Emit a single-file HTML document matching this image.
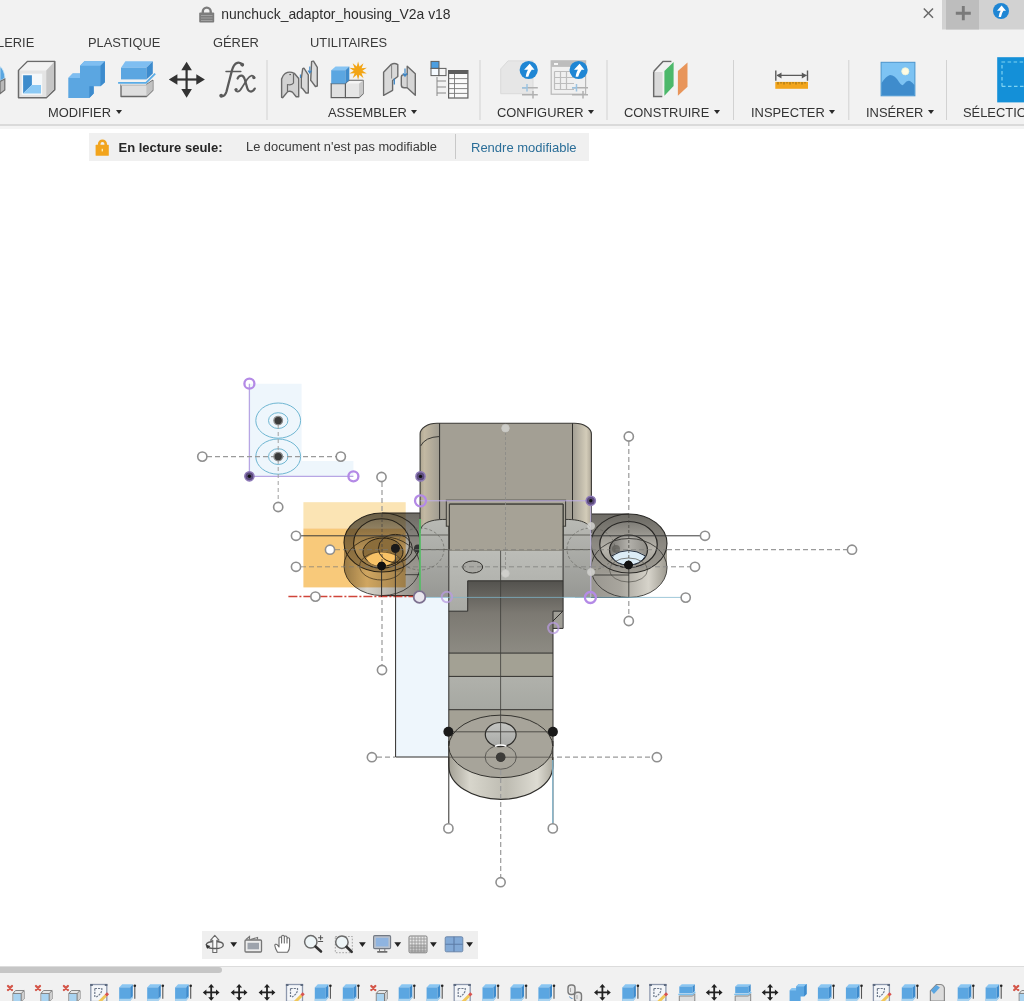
<!DOCTYPE html>
<html><head><meta charset="utf-8">
<style>
*{margin:0;padding:0;box-sizing:border-box}
html,body{width:1024px;height:1001px;overflow:hidden;background:#fff;font-family:"Liberation Sans",sans-serif;color:#3c3c3c}
.abs{position:absolute}
#top{position:absolute;left:0;top:0;width:1024px;height:125px;background:#f2f2f2}
#tb-line{position:absolute;left:0;top:124px;width:1024px;height:1.6px;background:#dadada}
#tb-line2{position:absolute;left:0;top:125.6px;width:1024px;height:3.6px;background:#f4f4f4}
.t{position:absolute;white-space:nowrap;line-height:1}
.tab{font-size:12.9px;color:#3a3a3a;top:36.8px}
.lbl{font-size:12.9px;color:#333;top:107px}
.caret{display:inline-block;width:0;height:0;border-left:3px solid transparent;border-right:3px solid transparent;border-top:4.5px solid #2a2a2a;margin-left:4.5px;vertical-align:3px}
.sep{position:absolute;top:60px;width:1px;height:60px;background:#d4d4d4}
#banner{position:absolute;left:89px;top:133px;width:500px;height:28px;background:#f0f0f0}
#navbar{position:absolute;left:202px;top:931px;width:276px;height:28px;background:#f0f0f0}
#timeline{position:absolute;left:0;top:965.5px;width:1024px;height:36px;background:#f1f1f1;border-top:1px solid #dcdcdc}
#scroll{position:absolute;left:0;top:966.5px;width:222px;height:6.5px;background:#c6c6c6;border-radius:0 3.5px 3.5px 0}
</style></head><body>
<div id="top"></div>
<div id="tb-line"></div><div id="tb-line2"></div>


<svg id="toolbar" style="position:absolute;left:0;top:0" width="1024" height="130" viewBox="0 0 1024 130">
<defs>
 <linearGradient id="tbBlueTop" x1="0" x2="0" y1="0" y2="1"><stop offset="0" stop-color="#8fcaf5"/><stop offset="1" stop-color="#6db6ee"/></linearGradient>
</defs>
<!-- tab area top right -->
<rect x="942" y="0" width="82" height="29.5" fill="#d2d2d2"/>
<rect x="946" y="0" width="33" height="29.5" fill="#bdbdbd"/>
<path d="M955.8 13.2 H970.8 M963.3 5.9 V20.3" stroke="#7a7a7a" stroke-width="2.9"/>
<circle cx="1001" cy="11" r="8" fill="#1f86d4"/>
<path d="M997 10.8 L1001.6 5.6 L1006 10.8 Z M998.6 17 Q999.2 12.5 1000.8 10.5 L1003.6 10.5 Q1001.6 13 1001 17 Z" fill="#fff"/>
<!-- close x -->
<path d="M923.8 8.5 L933 17.7 M933 8.5 L923.8 17.7" stroke="#6a6a6a" stroke-width="1.5"/>
<!-- title lock -->
<path d="M202.8 13 V11.6 A3.95 3.95 0 0 1 210.7 11.6 V13" fill="none" stroke="#7c7c7c" stroke-width="2.4"/>
<rect x="199.2" y="12.5" width="15" height="10" rx="1" fill="#7c7c7c"/>
<path d="M201 15.5 H212.5 M201 18 H212.5 M201 20.5 H212.5" stroke="#a9a9a9" stroke-width="0.8"/>

<!-- partial left icon -->
<path d="M0 66.5 Q4.5 70 5 78 L0 81 Z" fill="#5aa6e0" stroke="#cfe8f8" stroke-width="0.8"/>
<path d="M0 81.5 L4.8 79 V90 L0 93.7 Z" fill="#b9b9b9" stroke="#6e6e6e" stroke-width="1.2"/>

<!-- shell -->
<path d="M18.5 70.5 L27.4 61.4 H54.8 V89.6 L46.3 97.8 H18.5 Z" fill="#e4e4e4" stroke="#6b6b6b" stroke-width="1.5" stroke-linejoin="round"/>
<path d="M19.3 70.5 L27.8 62.2 H53.8 L46.3 70.5 Z" fill="#f3f3f3"/>
<path d="M46.3 70.5 L54 62.2 V89.2 L46.3 97 Z" fill="#c6c6c6"/>
<rect x="21.7" y="73.7" width="20.5" height="21.1" fill="#f5f8fa"/>
<path d="M23.1 75.2 H31.9 V84.9 L23.1 93.4 Z" fill="#3d8ccc"/>
<path d="M23.1 93.4 L31.9 84.9 H41 V93.4 Z" fill="#8cc9f4"/>

<!-- combine -->
<path d="M68.3 77.9 L72.7 73.6 H80 V65.7 L84.4 61.3 H104.9 V82.3 L100.5 86.3 H93.7 V93.6 L89.3 98 H68.3 Z" fill="#5ba6e1"/>
<path d="M68.3 77.9 L72.7 73.6 H80 V77.9 Z M80 65.7 L84.4 61.3 H104.9 L100.5 65.7 Z" fill="#7fbef1"/>
<path d="M100.5 65.7 L104.9 61.3 V82.3 L100.5 86.3 Z M89.3 86.3 H93.7 V93.6 L89.3 98 Z" fill="#3d8bcd"/>

<!-- split -->
<path d="M121 67.7 L125.4 61.3 H152.8 L146.4 67.7 Z" fill="#7fbef1"/>
<rect x="121" y="67.7" width="25.4" height="11.7" fill="#5ba6e1"/>
<path d="M146.4 67.7 L152.8 61.3 V73.6 L146.4 79.4 Z" fill="#3d8bcd"/>
<path d="M118.1 82.8 H146 L155.2 73.6" fill="none" stroke="#5aace6" stroke-width="1.8"/>
<path d="M121 84.8 H146.4 L152.8 80.4 V90.2 L146.4 96.5 H121 Z" fill="#dedede" stroke="#666" stroke-width="1.3" stroke-linejoin="round"/>
<path d="M146.4 84.8 L152.8 80.4 V90.2 L146.4 96.5 Z" fill="#c2c2c2"/>
<path d="M121 84.8 H146.4" stroke="#dedede" stroke-width="1.5"/>

<!-- move -->
<g fill="#333">
 <rect x="185.5" y="66" width="2.2" height="27"/><rect x="173" y="78.4" width="27" height="2.2"/>
 <path d="M186.6 61.7 L181.3 70.3 H191.9 Z M186.6 97.7 L181.3 89 H191.9 Z M168.8 79.5 L177.4 74.2 V84.8 Z M204.9 79.5 L196.3 74.2 V84.8 Z"/>
</g>
<!-- fx -->
<g fill="none" stroke="#5a5a5a" stroke-linecap="round">
 <path d="M242.6 65.2 Q240.5 62 237.3 62.8 Q233.5 64 231.8 71 L226.5 91.5 Q224.8 97 221 96.3" stroke-width="2.3"/>
 <circle cx="242.2" cy="64.6" r="1.9" fill="#5a5a5a" stroke="none"/>
 <circle cx="221.2" cy="95.6" r="1.9" fill="#5a5a5a" stroke="none"/>
 <path d="M226 71.4 H240.8" stroke-width="1.5"/>
 <path d="M237.6 78.5 Q239 75.2 241.8 75.6 Q243.8 76 244.8 79.5 L247.3 88.3 Q248.3 91.6 251 91.6 Q253.4 91.4 254.8 88.6" stroke-width="2.2"/>
 <path d="M254.6 78 Q253.8 75.5 251.6 75.6 Q249.6 75.8 247.2 79.3 L242 87.5 Q239.8 91.6 237.4 91.6 Q235.6 91.5 235.4 89.8" stroke-width="1.6"/>
 <circle cx="253.8" cy="77.6" r="1.6" fill="#5a5a5a" stroke="none"/>
 <circle cx="236.1" cy="89.6" r="1.6" fill="#5a5a5a" stroke="none"/>
</g>
<rect x="266.5" y="60" width="1" height="60" fill="#d2d2d2"/>

<!-- joint -->
<g stroke="#6a6a6a" stroke-width="1.4" stroke-linejoin="round">
 <path d="M281.6 97.3 V79 Q282.5 75.5 285.4 73.3 Q289.5 71 294.3 73.3 L298.7 78.5 V96.8 H296.2 L292.4 92.1 Q290 90.8 287.7 91.6 L282.6 97.7 Z" fill="#d2d2d2"/>
 <path d="M293.5 73.5 V83 Q292 85.5 287.5 84.5 V91.6" fill="none" stroke-width="1.2"/>
 <path d="M301.3 78.5 L302.7 68.7 Q303.5 68 304.1 68.4 L308.3 74.8 V93 H306 L302.3 88.3 L301.3 87.9 Z" fill="#dadada"/>
 <path d="M310.7 80.4 L311.6 61.6 Q312.5 60.9 313.5 61.2 L317.3 67.3 V86 L315.4 86.5 L311.6 81.3 Z" fill="#dddddd"/>
</g>
<path d="M289.3 74.6 H291" stroke="#555" stroke-width="1"/>
<path d="M300.4 74.5 V78 M309.8 66.5 V73 M308 70.5 L309.8 73 L311.6 70.5" stroke="#3d86c6" stroke-width="1.1" fill="none"/>
<!-- new component -->
<path d="M345.4 83.6 L349.3 80.3 H363.1 V93.5 L359 97.6 H345.4 Z" fill="#e6e6e6" stroke="#5e5e5e" stroke-width="1.2" stroke-linejoin="round"/>
<path d="M359 83.6 L363.1 80.3 V93.5 L359 97.6 Z" fill="#c9c9c9"/>
<path d="M346 83.6 H359 L362.6 80.8 H349.5 Z" fill="#f4f4f4"/>
<rect x="331.2" y="83.6" width="14.2" height="14" fill="#e0e0e0" stroke="#5e5e5e" stroke-width="1.2"/>
<path d="M331.2 70.2 L335.6 66.6 H349.3 L345.4 70.2 Z" fill="#86c4f3"/>
<rect x="331.2" y="70.2" width="14.2" height="13.4" fill="#5ba6e1"/>
<path d="M345.4 70.2 L349.3 66.6 V80 L345.4 83.6 Z" fill="#3f8ccc"/>
<path d="M358.10 61.50 L359.43 66.61 L363.51 63.26 L361.58 68.17 L366.85 67.86 L362.40 70.70 L366.85 73.54 L361.58 73.23 L363.51 78.14 L359.43 74.79 L358.10 79.90 L356.77 74.79 L352.69 78.14 L354.62 73.23 L349.35 73.54 L353.80 70.70 L349.35 67.86 L354.62 68.17 L352.69 63.26 L356.77 66.61 Z" fill="#f2a516"/>
<!-- joint 2 -->
<g stroke="#6a6a6a" stroke-width="1.4" stroke-linejoin="round">
 <path d="M383.6 72.2 L391.3 64.3 Q394.5 62.6 397.8 64.6 V76.5 L392.6 80.5 V90.3 L383.6 95.3 Z" fill="#d9d9d9"/>
 <path d="M401.3 77 Q401.3 74.6 404.2 74.6 H407.2 V66.3 L415.3 73.8 V95.3 L407.2 87.8 H404.2 Q401.3 87.8 401.3 85 Z" fill="#d6d6d6"/>
</g>
<path d="M391.6 64.5 V78.5 M407.2 74.6 V87.8" stroke="#7a7a7a" stroke-width="0.9"/>
<path d="M394.3 78.5 V84.5" stroke="#3d86c6" stroke-width="1.3"/>
<path d="M405 68.5 V75.5 M403 73.3 L405 76.2 L407 73.3" stroke="#3d86c6" stroke-width="1.2" fill="none"/>
<!-- BOM -->
<rect x="431" y="61.4" width="8" height="7" fill="#4c9ee0" stroke="#5e5e5e" stroke-width="1"/>
<rect x="431" y="68.4" width="8" height="7.2" fill="#f5faff" stroke="#5e5e5e" stroke-width="1"/>
<rect x="439" y="68.4" width="7" height="7.2" fill="#f5f5f5" stroke="#5e5e5e" stroke-width="1"/>
<path d="M437 77 V96 M437 81 H446 M437 87 H446 M437 93 H446" stroke="#888" stroke-width="1"/>
<rect x="448.6" y="70.6" width="19.3" height="27.4" fill="#fafafa" stroke="#5e5e5e" stroke-width="1.2"/>
<rect x="448.6" y="70.6" width="19.3" height="3.4" fill="#5e5e5e"/>
<path d="M448.6 78.6 H467.9 M448.6 83.6 H467.9 M448.6 88.6 H467.9 M448.6 93.4 H467.9 M454.5 74 V98" stroke="#777" stroke-width="0.9"/>
<rect x="479.5" y="60" width="1" height="60" fill="#d2d2d2"/>

<!-- configure 1 -->
<path d="M500.7 69 L508 60.9 H533 V93.7 H500.7 Z" fill="#e6e6e6" stroke="#dadada" stroke-width="1"/>
<circle cx="528.7" cy="70" r="9.1" fill="#1f86d4"/>
<path d="M524.1 69.8 L529.7 63.8 L534.5 69.8 Z M525.7 76.8 Q526.5 71.2 528.5 69.5 L531.9000000000001 69.5 Q529.5 72.5 528.3000000000001 76.8 Z" fill="#fff"/>
<path d="M522 87.8 H537.8 M522 94.7 H537.8" stroke="#b0b0b0" stroke-width="1.5"/>
<path d="M527 84 V91.5" stroke="#9cc3e0" stroke-width="1.5"/><path d="M533 91 V98.5" stroke="#b0b0b0" stroke-width="1.5"/>
<path d="M522 87.8 H527" stroke="#9cc3e0" stroke-width="1.5"/>

<!-- configure 2 -->
<rect x="551.2" y="60.9" width="34.4" height="33.3" fill="#f0f0f0" stroke="#b8b8b8" stroke-width="1.2"/>
<rect x="551.2" y="60.9" width="34.4" height="6" fill="#bdbdbd"/>
<rect x="554" y="63" width="4" height="2" fill="#f6f6f6"/>
<path d="M554.5 71.5 H574 M554.5 77.5 H574 M554.5 83.5 H574 M554.5 89.5 H574 M554.5 71.5 V89.5 M560.5 71.5 V89.5 M566.5 71.5 V89.5" stroke="#bdbdbd" stroke-width="1.2" fill="none"/>
<circle cx="578.6" cy="70" r="9.1" fill="#1f86d4"/>
<path d="M574.0 69.8 L579.6 63.8 L584.4 69.8 Z M575.6 76.8 Q576.4 71.2 578.4 69.5 L581.8000000000001 69.5 Q579.4 72.5 578.2 76.8 Z" fill="#fff"/>
<path d="M572 87.8 H588 M572 94.7 H588" stroke="#b0b0b0" stroke-width="1.5"/>
<path d="M576.5 84 V91.5" stroke="#9cc3e0" stroke-width="1.5"/><path d="M583 91 V98.5" stroke="#b0b0b0" stroke-width="1.5"/>
<path d="M572 87.8 H577" stroke="#9cc3e0" stroke-width="1.5"/>
<rect x="606.5" y="60" width="1" height="60" fill="#d2d2d2"/>

<!-- construct -->
<path d="M653.7 71.6 L663 61.4 H671.4" fill="none" stroke="#6a6a6a" stroke-width="1.5"/>
<path d="M654.4 72 H662.5 V95.8 H654.4 Z" fill="#d9d9d9"/>
<path d="M653.7 71.6 V96.4 H662.3" fill="none" stroke="#6a6a6a" stroke-width="1.5"/>
<path d="M663.5 62.5 H672 L663 71.5 Z" fill="#f0f0f0"/>
<path d="M664.4 71.1 L673.6 62 V86.1 L664.4 95.8 Z" fill="#4cb86a"/>
<path d="M677.9 71.1 L687.5 62.5 V86.7 L677.9 95.8 Z" fill="#e8955a"/>
<rect x="733" y="60" width="1" height="60" fill="#d2d2d2"/>

<!-- inspect -->
<rect x="775.3" y="81.9" width="32.7" height="6.9" fill="#f2a51c"/>
<path d="M778 82 V84.5 M781 82 V83.5 M784 82 V84.5 M787 82 V83.5 M790 82 V84.5 M793 82 V83.5 M796 82 V84.5 M799 82 V83.5 M802 82 V84.5 M805 82 V83.5" stroke="#7a5a10" stroke-width="0.8"/>
<path d="M775.8 70.6 V80.8 M807.5 70.6 V80.8 M777 75.4 H806.5" stroke="#5a5a5a" stroke-width="1.4"/>
<path d="M776.5 75.4 L781.5 72.4 V78.4 Z M806.8 75.4 L801.8 72.4 V78.4 Z" fill="#5a5a5a"/>
<rect x="848.3" y="60" width="1" height="60" fill="#d2d2d2"/>

<!-- insert -->
<rect x="881.1" y="62.3" width="33.8" height="33.5" fill="#7dc3f3" stroke="#4a94cc" stroke-width="1"/>
<path d="M881.6 83 Q886 76 890 75 Q895 75 899 82 Q902 87 904 84 Q907 80 910 81 Q913 83 914.4 85 V95.3 H881.6 Z" fill="#3f8ccc"/>
<circle cx="905.3" cy="71.3" r="3.6" fill="#fffbe2" stroke="#e9f3da" stroke-width="0.8"/>
<rect x="946" y="60" width="1" height="60" fill="#d2d2d2"/>

<!-- select -->
<rect x="997.2" y="57.2" width="30" height="45.2" fill="#1490d8"/>
<path d="M1002 86.4 V62 H1030 M1002 86.4 H1030" fill="none" stroke="#7fd3f2" stroke-width="1.2" stroke-dasharray="3.5 2.5"/>
</svg>

<!-- title -->
<div class="t" style="left:221.2px;top:7.8px;font-size:13.9px;color:#2e2e2e">nunchuck_adaptor_housing_V2a v18</div>

<!-- tabs -->
<div class="t tab" style="left:-3px">LERIE</div>
<div class="t tab" style="left:88px">PLASTIQUE</div>
<div class="t tab" style="left:213px">GÉRER</div>
<div class="t tab" style="left:310px">UTILITAIRES</div>

<!-- labels -->
<div class="t lbl" style="left:48px">MODIFIER<span class="caret"></span></div>
<div class="t lbl" style="left:328px">ASSEMBLER<span class="caret"></span></div>
<div class="t lbl" style="left:497px">CONFIGURER<span class="caret"></span></div>
<div class="t lbl" style="left:624px">CONSTRUIRE<span class="caret"></span></div>
<div class="t lbl" style="left:751px">INSPECTER<span class="caret"></span></div>
<div class="t lbl" style="left:866px">INSÉRER<span class="caret"></span></div>
<div class="t lbl" style="left:963px">SÉLECTION</div>

<div id="banner"></div>
<svg style="position:absolute;left:90px;top:135px" width="25" height="25" viewBox="90 135 25 25">
<path d="M99.2 145.5 V144 A3.25 3.25 0 0 1 105.7 144 V145.5" fill="none" stroke="#f0a41f" stroke-width="2.6"/>
<rect x="95.6" y="144.8" width="13.2" height="11" rx="0.6" fill="#f2a41c"/>
<rect x="101.6" y="148.8" width="1.4" height="2.6" fill="#ffe9a8"/>
</svg>

<div class="t" style="left:118.5px;top:141px;font-size:13px;font-weight:bold;color:#262626">En lecture seule:</div>
<div class="t" style="left:246px;top:141px;font-size:12.85px;color:#3a3a3a">Le document n'est pas modifiable</div>
<div class="abs" style="left:455px;top:134px;width:1px;height:25px;background:#c8c8c8"></div>
<div class="t" style="left:471px;top:141px;font-size:13px;color:#2b6e98">Rendre modifiable</div>


<svg id="model" style="position:absolute;left:0;top:0" width="1024" height="1001" viewBox="0 0 1024 1001">
<defs>
 <linearGradient id="gTopL" x1="0" x2="1" y1="0" y2="0"><stop offset="0" stop-color="#b0a792"/><stop offset="0.2" stop-color="#c3b9a3"/><stop offset="1" stop-color="#a09c91"/></linearGradient>
 <linearGradient id="gTopR" x1="0" x2="1" y1="0" y2="0"><stop offset="0" stop-color="#a29e93"/><stop offset="0.75" stop-color="#d3ccb9"/><stop offset="1" stop-color="#b2ab9b"/></linearGradient>
 <linearGradient id="gShL" x1="0" x2="0" y1="0" y2="1"><stop offset="0" stop-color="#b9bab5"/><stop offset="1" stop-color="#979894"/></linearGradient>
 <linearGradient id="gNotch" x1="0" x2="0" y1="0" y2="1"><stop offset="0" stop-color="#bcbdb8"/><stop offset="1" stop-color="#a9aaa5"/></linearGradient>
 <linearGradient id="gDark" x1="0" x2="0" y1="0" y2="1"><stop offset="0" stop-color="#53524e"/><stop offset="0.45" stop-color="#7c7972"/><stop offset="1" stop-color="#8d8b83"/></linearGradient>
 <linearGradient id="gBand2" x1="0" x2="0" y1="0" y2="1"><stop offset="0" stop-color="#b0b1ab"/><stop offset="1" stop-color="#a6a8a2"/></linearGradient>
 <linearGradient id="gCyl" x1="0" x2="1" y1="0" y2="0"><stop offset="0" stop-color="#a3a095"/><stop offset="0.2" stop-color="#d8d6cc"/><stop offset="0.55" stop-color="#bdbbb1"/><stop offset="0.85" stop-color="#dddbd2"/><stop offset="1" stop-color="#aeaba0"/></linearGradient>
 <linearGradient id="gEarR" x1="0" x2="1" y1="0" y2="0"><stop offset="0" stop-color="#6e6c66"/><stop offset="0.5" stop-color="#8a877f"/><stop offset="0.85" stop-color="#c9c6bc"/><stop offset="1" stop-color="#8f8c84"/></linearGradient>
 <linearGradient id="gEarL" x1="0" x2="1" y1="0" y2="0"><stop offset="0" stop-color="#8c7a55"/><stop offset="0.4" stop-color="#b08f52"/><stop offset="0.8" stop-color="#7a6f5c"/><stop offset="1" stop-color="#5c5b58"/></linearGradient>

 <linearGradient id="gEarSide" x1="0" x2="1" y1="0" y2="0"><stop offset="0" stop-color="#8f8d87"/><stop offset="0.5" stop-color="#a9a69e"/><stop offset="0.8" stop-color="#d6d3ca"/><stop offset="1" stop-color="#9c998f"/></linearGradient>
 <linearGradient id="gEarSideL" x1="0" x2="1" y1="0" y2="0"><stop offset="0" stop-color="#9c998f"/><stop offset="0.25" stop-color="#d6d3ca"/><stop offset="0.6" stop-color="#a9a69e"/><stop offset="1" stop-color="#7d7b76"/></linearGradient>
 <linearGradient id="gEarTop" x1="0" x2="0" y1="0" y2="1"><stop offset="0" stop-color="#6d6b65"/><stop offset="0.5" stop-color="#8b8881"/><stop offset="1" stop-color="#9d9a92"/></linearGradient>
 <linearGradient id="gRing" x1="0" x2="0" y1="0" y2="1"><stop offset="0" stop-color="#7f7d77"/><stop offset="0.6" stop-color="#b8b5ad"/><stop offset="1" stop-color="#9a978f"/></linearGradient>
 <linearGradient id="gHole" x1="0" x2="1" y1="0" y2="0"><stop offset="0" stop-color="#7a7873"/><stop offset="0.5" stop-color="#b3b1ab"/><stop offset="1" stop-color="#8e8c86"/></linearGradient>
<linearGradient id="gHole2" x1="0" x2="0" y1="0" y2="1"><stop offset="0" stop-color="#c4c5c2"/><stop offset="1" stop-color="#a7a8a5"/></linearGradient>
</defs>

<!-- light blue sketch regions -->
<path d="M249.4 383.7 H301.6 V461 H353.4 V476.3 H249.4 Z" fill="#eef6fc"/>
<rect x="395.6" y="597" width="53.2" height="160" fill="#eef6fc"/>


<!-- right ear -->
<g id="earR">
 <path d="M575 514 H629 A38 29.5 0 0 1 667 543.5 V568.0 A38 29.5 0 0 1 629 597.5 H575 Z" fill="url(#gEarSide)"/>
 <path d="M575 514 H629 A38 29.5 0 0 1 667 543.5 A38 29.5 0 0 1 629 573.0 H575 Z" fill="url(#gEarTop)"/>
 <ellipse cx="628.5" cy="544.5" rx="28.75" ry="23" fill="url(#gRing)" stroke="#262523" stroke-width="1.2"/>
 <ellipse cx="628.5" cy="550" rx="19" ry="15" fill="url(#gHole)" stroke="#262523" stroke-width="1.2"/>
 <circle cx="616" cy="549" r="4" fill="#55534f" fill-opacity="0.6"/>
 <path d="M611.5 556 Q628.5 545 645.5 556 Q640 565 628.5 565 Q616 565 611.5 556 Z" fill="#dcecf6" stroke="#263040" stroke-width="1"/>
 <ellipse cx="628.5" cy="570" rx="19" ry="12" fill="none" stroke="#55534e" stroke-width="0.7"/>
 <ellipse cx="629" cy="568.0" rx="38" ry="29.5" fill="none" stroke="#3a3935" stroke-width="0.9"/>
 <ellipse cx="629" cy="543.5" rx="38" ry="29.5" fill="none" stroke="#2a2926" stroke-width="1.1"/>
 <path d="M591 514 H629 M591 597.5 H629" stroke="#2a2926" stroke-width="1.1"/>
 <path d="M591 575 H629 M628.8 565 V597.5" stroke="#2a2926" stroke-width="0.8"/>
 <circle cx="628.5" cy="565" r="4.3" fill="#111"/>
</g>
<!-- left ear -->
<g id="earL">
 <path d="M436 513 H382 A38 29.5 0 0 0 344 542.5 V566.1 A38 29.5 0 0 0 382 595.6 H436 Z" fill="url(#gEarSideL)"/>
 <path d="M436 513 H382 A38 29.5 0 0 0 344 542.5 A38 29.5 0 0 0 382 572.0 H436 Z" fill="url(#gEarTop)"/>
 <ellipse cx="381.6" cy="543.4" rx="28" ry="24.7" fill="url(#gRing)" stroke="#262523" stroke-width="1.1"/>
 <ellipse cx="383" cy="552" rx="20" ry="14" fill="#8f8a7a" stroke="#262523" stroke-width="1"/>
 <path d="M366 558 Q381 546 397 556 Q392 566 381 566 Q370 566 366 558 Z" fill="#fff6d6"/>
 <ellipse cx="395.4" cy="548.4" rx="17" ry="14" fill="none" stroke="#33312d" stroke-width="1"/>
 <ellipse cx="381.6" cy="566" rx="22" ry="14" fill="none" stroke="#4a4843" stroke-width="0.8"/>
 <ellipse cx="382" cy="566.1" rx="38" ry="29.5" fill="none" stroke="#3a3935" stroke-width="0.9"/>
 <ellipse cx="382" cy="542.5" rx="38" ry="29.5" fill="none" stroke="#2a2926" stroke-width="1.1"/>
 <path d="M382 513 H420 M382 595.6 H420" stroke="#2a2926" stroke-width="1.1"/>
 <path d="M405 574.7 H420" stroke="#2a2926" stroke-width="0.8"/>
 <circle cx="381.6" cy="566" r="4.3" fill="#111"/>
 <circle cx="395.4" cy="548.4" r="4.3" fill="#1a1a1a"/>
 <circle cx="418" cy="548.4" r="4" fill="#333"/>
</g>
<!-- orange profile multiply -->
<rect x="303.4" y="502.2" width="102.3" height="26.3" fill="#fbe4b4" style="mix-blend-mode:multiply"/>
<rect x="303.4" y="528.5" width="102.3" height="58.9" fill="#f8c97a" style="mix-blend-mode:multiply"/>

<!-- upper housing -->
<path d="M420.1 532 V434 A17 10.7 0 0 1 437 423.3 H574.5 A17 10.7 0 0 1 591.4 434 V532 Z" fill="#a39f94"/>
<path d="M420.6 532 V434 A16.5 10.2 0 0 1 437 423.8 H439.6 V532 Z" fill="url(#gTopL)"/>
<path d="M572.5 532 V423.8 H574.5 A16.5 10.2 0 0 1 590.9 434 V532 Z" fill="url(#gTopR)"/>
<path d="M420.1 532 V434 A17 10.7 0 0 1 437 423.3 H574.5 A17 10.7 0 0 1 591.4 434 V532" fill="none" stroke="#3a3935" stroke-width="1.1"/>
<path d="M439.6 423.3 V519.4 M572.5 423.3 V519.4" stroke="#2e2d2a" stroke-width="1"/>
<path d="M420.6 446 Q425 437 439.6 436.5" fill="none" stroke="#3a3935" stroke-width="1"/>

<!-- shoulders -->
<path d="M420.1 597 V533 C420.1 524 428 519.4 446 519.4 H448.8 V597 Z" fill="url(#gShL)"/>
<path d="M591.4 597 V533 C591.4 524 583.5 519.4 565.5 519.4 H563.1 V597 Z" fill="url(#gShL)"/>
<path d="M420.1 533 C420.1 524 428 519.4 446 519.4 M591.4 533 C591.4 524 583.5 519.4 565.5 519.4" fill="none" stroke="#3a3935" stroke-width="1"/>

<!-- stem -->
<rect x="448.8" y="504" width="114.3" height="46" fill="#a6a296"/>
<path d="M448.8 550 H563.1 V580.8 H467.7 V611.2 H448.8 Z" fill="url(#gNotch)"/>
<path d="M467.7 580.8 H563.1 V611.2 H553 V653.1 H448.8 V611.2 H467.7 Z" fill="url(#gDark)"/>
<path d="M553 611.2 H562.8 V628.4 H553 Z" fill="#a09e96"/>
<rect x="448.8" y="653.1" width="104.2" height="23.3" fill="#a3a194"/>
<rect x="448.8" y="676.4" width="104.2" height="33.3" fill="url(#gBand2)"/>
<rect x="448.8" y="709.7" width="104.2" height="40" fill="#a4a195"/>

<!-- bottom cylinder -->
<path d="M448.8 741 V766 A52 33.4 0 0 0 552.8 766 V741 Z" fill="url(#gCyl)"/>
<path d="M448.8 741 V766 A52 33.4 0 0 0 552.8 766 V741" fill="none" stroke="#2e2d2a" stroke-width="1.2"/>
<ellipse cx="500.8" cy="746.4" rx="52" ry="31.25" fill="#a7a49a" stroke="#34332f" stroke-width="1"/>
<ellipse cx="500.7" cy="734.6" rx="15.4" ry="12.1" fill="url(#gHole2)" stroke="#2e2d2a" stroke-width="1.2"/>
<ellipse cx="500.7" cy="757.2" rx="15.6" ry="12" fill="none" stroke="#4a4945" stroke-width="0.8"/>
<circle cx="500.7" cy="757.2" r="4.5" fill="#3a3a38"/>

<!-- stem outlines -->
<path d="M448.8 504 V746 M563.1 504 V611.2 M553 611.2 V746 M553 611.2 H563.1 V628.4 H553 M553 621 L562.8 611.2" fill="none" stroke="#2e2d2a" stroke-width="1"/>
<path d="M448.8 550 H563.1 M467.7 580.8 H563.1 M448.8 611.2 H467.7 V580.8 M448.8 653.1 H553 M448.8 676.4 H553 M448.8 709.7 H553" fill="none" stroke="#2e2d2a" stroke-width="1"/>
<path d="M500.6 550 V746" stroke="#3e3d3a" stroke-width="0.8"/>
<path d="M420 535 H591.4 M420 549.6 H448.8 M563.1 549.6 H591.4" stroke="#4d4c48" stroke-width="0.8"/>
<ellipse cx="472.7" cy="567" rx="10" ry="6" fill="#a9a9a4" stroke="#33322e" stroke-width="1"/>

<!-- lid -->
<rect x="446.3" y="500.2" width="119.3" height="26" fill="#a8a498" stroke="#3a3935" stroke-width="1"/>
<path d="M449.4 526.2 V504.1 H563.1 V526.2" fill="#a6a296" stroke="#3a3935" stroke-width="1"/>
<rect x="449.4" y="504.6" width="113.2" height="46" fill="#a6a296"/>
<path d="M449.4 504.1 H563.1 M449.4 504.1 V550 M563.1 504.1 V550" stroke="#3a3935" stroke-width="1"/>

<!-- left light blue rect outline -->
<path d="M395.6 597 V757 H448.8 M448.8 757 V828 M552.9 757 V828" fill="none" stroke="#2e2d2a" stroke-width="1"/>

<!-- ===== overlays ===== -->
<g fill="none">
 <!-- upper-left sketch -->
 <path d="M249.4 383.7 V476.3 H353.4" stroke="#b7a6e4" stroke-width="1.3"/>
 <g stroke="#6fb6d2" stroke-width="1">
  <ellipse cx="278.2" cy="420.6" rx="22.4" ry="17.6"/><ellipse cx="278.2" cy="420.6" rx="9.7" ry="7.9"/>
  <ellipse cx="278.2" cy="456.6" rx="22.4" ry="17.6"/><ellipse cx="278.2" cy="456.6" rx="9.7" ry="7.9"/>
 </g>
 <path d="M207 456.6 H336" stroke="#9a9a9a" stroke-width="1.2" stroke-dasharray="5 3"/>
 <path d="M278.2 425 V502" stroke="#a0a0a0" stroke-width="1" stroke-dasharray="4 3"/>
</g>
<g fill="#3a3a3a" stroke="#8d8d8d" stroke-width="1.3">
 <circle cx="278.2" cy="420.6" r="4.3"/><circle cx="278.2" cy="456.6" r="4.3"/>
</g>

<!-- main model lines -->
<g fill="none">
 <path d="M505.5 432 V569" stroke="#8a8a86" stroke-width="0.8" stroke-dasharray="3 2"/>
 <path d="M500.7 770 V877" stroke="#9a9a9a" stroke-width="1.2" stroke-dasharray="5 3"/>
 <path d="M420.5 500.8 H590.8" stroke="#bfb0e6" stroke-width="1"/>
 <path d="M590.8 500.8 V597" stroke="#c3b7e6" stroke-width="1"/>
 <!-- left -->
 <path d="M382 482 V512 M382 600 V665" stroke="#9a9a9a" stroke-width="1.2" stroke-dasharray="5 3"/>
 <path d="M382 514 V562 M628.8 515 V561" stroke="#4a4844" stroke-width="0.8" stroke-dasharray="3 2"/>
 <path d="M301 535.8 H420" stroke="#3a3a3a" stroke-width="1"/>
 <path d="M335 549.7 H667" stroke="#7a7a78" stroke-width="0.9" stroke-dasharray="5 3" stroke-opacity="0.8"/>
 <path d="M301 566.8 H591" stroke="#7a7a78" stroke-width="0.9" stroke-dasharray="5 3" stroke-opacity="0.8"/>
 <path d="M288.4 596.6 H420" stroke="#d0453a" stroke-width="1.5" stroke-dasharray="9 2 2 2"/>
 <path d="M381.6 566 V597 M395.4 548 V597" stroke="#2e2d2a" stroke-width="1"/>
 <ellipse cx="420" cy="549" rx="24" ry="21" stroke="#5a5955" stroke-width="0.8" stroke-dasharray="3 2" stroke-opacity="0.7"/>
 <ellipse cx="591" cy="549" rx="24" ry="21" stroke="#5a5955" stroke-width="0.8" stroke-dasharray="3 2" stroke-opacity="0.7"/>
 <path d="M420 519 V592" stroke="#55bd66" stroke-width="2" stroke-opacity="0.85"/>
 <!-- right -->
 <path d="M628.8 441 V512 M628.8 601 V616" stroke="#9a9a9a" stroke-width="1.2" stroke-dasharray="5 3"/>
 <path d="M591 535.8 H700" stroke="#3a3a3a" stroke-width="1"/>
 <path d="M667 549.7 H847" stroke="#9a9a9a" stroke-width="1.2" stroke-dasharray="5 3"/>
 <path d="M591 566.8 H690" stroke="#8a8a8a" stroke-width="1" stroke-dasharray="5 3"/>
 <path d="M420 597.4 H681" stroke="#7fb6cc" stroke-width="1" stroke-opacity="0.75"/>
 <!-- bottom -->
 <path d="M448.4 731.8 H552.9" stroke="#3a3935" stroke-width="0.8"/>
 <path d="M495 746.2 Q500.7 743.8 506.4 746.2" stroke="#ffffff" stroke-width="1.6"/>
 <path d="M377 757.2 H395" stroke="#9a9a9a" stroke-width="1.2" stroke-dasharray="5 3"/>
 <path d="M557 757.2 H652" stroke="#9a9a9a" stroke-width="1.2" stroke-dasharray="5 3"/>
 <path d="M448.8 757.2 H552.9" stroke="#55534e" stroke-width="0.8"/>
 <path d="M552.8 760 V823" stroke="#8cc4dc" stroke-width="1.2"/>
</g>

<!-- hollow gray handles -->
<g fill="#ffffff" stroke="#8f8f8f" stroke-width="1.6">
 <circle cx="202.3" cy="456.6" r="4.6"/><circle cx="340.8" cy="456.6" r="4.6"/><circle cx="278.2" cy="507" r="4.6"/>
 <circle cx="381.5" cy="477" r="4.6"/><circle cx="382" cy="670" r="4.6"/>
 <circle cx="296" cy="535.8" r="4.6"/><circle cx="330" cy="549.7" r="4.6"/><circle cx="296" cy="566.8" r="4.6"/><circle cx="315.4" cy="596.6" r="4.6"/>
 <circle cx="628.8" cy="436.5" r="4.6"/><circle cx="628.8" cy="621" r="4.6"/>
 <circle cx="705" cy="535.8" r="4.6"/><circle cx="852" cy="549.7" r="4.6"/><circle cx="695" cy="566.8" r="4.6"/><circle cx="685.7" cy="597.6" r="4.6"/>
 <circle cx="371.9" cy="757.2" r="4.6"/><circle cx="656.9" cy="757.2" r="4.6"/>
 <circle cx="448.4" cy="828.4" r="4.6"/><circle cx="552.8" cy="828.4" r="4.6"/><circle cx="500.6" cy="882.2" r="4.6"/>
</g>
<g fill="#d4d4d0" fill-opacity="0.85" stroke="#c8c8c4" stroke-width="0.8">
 <circle cx="505.5" cy="428.2" r="3.8"/><circle cx="505.5" cy="573.5" r="3.8"/>
 <circle cx="591" cy="526" r="3.6"/><circle cx="591" cy="572.1" r="3.6"/>
</g>
<!-- purple handles -->
<g fill="none" stroke="#b48ae6" stroke-width="2.3">
 <circle cx="249.4" cy="383.7" r="5"/><circle cx="353.4" cy="476.3" r="5"/>
 <circle cx="420.5" cy="500.8" r="5.5"/><circle cx="590.4" cy="597.5" r="5.5"/>
</g>
<g fill="none" stroke="#b89be0" stroke-width="2" stroke-opacity="0.75">
 <circle cx="446.9" cy="597" r="5.2"/><circle cx="553.3" cy="628" r="5.2"/>
</g>
<circle cx="419.5" cy="597" r="5.8" fill="#e9e6ee" stroke="#7d7190" stroke-width="1.8"/>
<g fill="#5b4b7c" stroke="#8e7ab8" stroke-width="1.5">
 <circle cx="249.4" cy="476.3" r="4.6"/><circle cx="420.5" cy="476.4" r="4.6"/><circle cx="590.8" cy="500.8" r="4.6"/>
</g>
<g fill="#111"><circle cx="249.4" cy="476.3" r="1.7"/><circle cx="420.5" cy="476.4" r="1.7"/><circle cx="590.8" cy="500.8" r="1.7"/></g>
<g fill="#1a1a1a"><circle cx="448.4" cy="731.8" r="5"/><circle cx="552.9" cy="731.8" r="5"/></g>
<circle cx="500.7" cy="757.2" r="4.8" fill="#3c3b38"/>
<circle cx="628.5" cy="565" r="4.3" fill="#111"/>
<circle cx="381.6" cy="566" r="4.3" fill="#111"/>
<circle cx="395.4" cy="548.4" r="4.3" fill="#1a1a1a"/>
</svg>

<div id="timeline"></div>
<div id="scroll"></div>

<svg id="navsvg" style="position:absolute;left:0;top:920px" width="1024" height="81" viewBox="0 920 1024 81">
<defs>
 <symbol id="caret" overflow="visible"><path d="M0 0 H6.8 L3.4 4.8 Z" fill="#222"/></symbol>
 <symbol id="i-rx" overflow="visible">
  <path d="M1.5 2 L5.5 6 M5.5 2 L1.5 6" stroke="#d4574a" stroke-width="2.3" stroke-linecap="round"/>
  <path d="M6.5 9.4 L9 6.6 H17.6 V15 L14.7 17.8 H6.5 Z" fill="#f2f2f2" stroke="#7a7a7a" stroke-width="1"/>
  <path d="M14.7 9.4 L17.6 6.6 V15 L14.7 17.8 Z" fill="#cfcfcf"/>
  <rect x="7" y="9.8" width="7.5" height="8" fill="#a9d3f0"/>
  <path d="M6.5 9.4 H14.7 V18 M14.7 9.4 L17.6 6.6" fill="none" stroke="#7a7a7a" stroke-width="1"/>
 </symbol>
 <symbol id="i-ex" overflow="visible">
  <path d="M0.4 3.4 L3.4 0.2 H14 L11.4 3.4 Z" fill="#8ac6f2"/>
  <rect x="0.4" y="3.4" width="11" height="13.6" fill="#5ba6e1"/>
  <path d="M11.4 3.4 L14 0.2 V13.5 L11.4 16.5 Z" fill="#3d8bcd"/>
  <path d="M0.4 14.8 H11.4 L14 12 V14 L11.4 17 H0.4 Z" fill="#a9d3f0"/>
  <path d="M16 2 V14.8" stroke="#555" stroke-width="1.1"/><circle cx="16" cy="1.8" r="1.3" fill="#222"/>
 </symbol>
<symbol id="i-mv" overflow="visible">
  <path d="M8 2.5 V14.3 M2.2 8.4 H13.8" stroke="#222" stroke-width="1.8"/>
  <path d="M8 0 L5 3.6 H11 Z M8 16.8 L5 13.2 H11 Z M-0.4 8.4 L3.2 5.4 V11.4 Z M16.4 8.4 L12.8 5.4 V11.4 Z" fill="#222"/>
 </symbol>
 <symbol id="i-sk" overflow="visible">
  <rect x="0" y="0.5" width="16" height="17" fill="#f4f6f9" stroke="#8d98ad" stroke-width="1.3"/>
  <path d="M-0.6 0 H2 V2 H-0.6 Z M14 0 H16.6 V2 H14 Z" fill="#5e6b80"/>
  <path d="M4 4.5 H11 Q11.5 9.5 5.5 13 M4 4.5 V13" fill="none" stroke="#6e7a8c" stroke-width="1.2" stroke-dasharray="2.2 1"/>
  <path d="M8.5 18 L15 11.5" stroke="#f0c75a" stroke-width="3"/><path d="M15 11.5 L17.2 9.3" stroke="#d9534f" stroke-width="3"/>
 </symbol>
 <symbol id="i-jt" overflow="visible">
  <rect x="2" y="1" width="7" height="9.5" rx="3" fill="#e8e8e8" stroke="#7a7a7a" stroke-width="1.4"/>
  <rect x="8.5" y="8.3" width="7" height="9.5" rx="3" fill="#e8e8e8" stroke="#7a7a7a" stroke-width="1.4"/>
  <path d="M4.5 4 V8 M11 11 V15" stroke="#aaa" stroke-width="1"/>
  <path d="M3.5 12.5 Q4 14.5 6.5 14.5" fill="none" stroke="#5a8fc0" stroke-width="1"/>
 </symbol>
 <symbol id="i-sp" overflow="visible">
  <path d="M1.5 2.5 L4 0.2 H17 L14.8 2.5 Z" fill="#8ac6f2"/>
  <rect x="1.5" y="2.5" width="13.3" height="6.8" fill="#5ba6e1"/>
  <path d="M14.8 2.5 L17 0.2 V7 L14.8 9.3 Z" fill="#3d8bcd"/>
  <path d="M0.5 10.5 H14.8 L17.5 7.8" fill="none" stroke="#7cc0ee" stroke-width="1.4"/>
  <path d="M1.5 12 H14.8 L17 9.8 V17 L14.8 19 H1.5 Z" fill="#dedede" stroke="#888" stroke-width="1"/>
 </symbol>
 <symbol id="i-cb" overflow="visible">
  <path d="M0 6.5 L2.5 4 H6.5 V2.5 L9 0 H17 V10 L14.5 12.5 H11 V17 L8.5 19 H0 Z" fill="#5ba6e1"/>
  <path d="M6.5 2.5 L9 0 H17 L14.5 2.5 Z M0 6.5 L2.5 4 H6.5 V6.5 Z" fill="#8ac6f2"/>
  <path d="M14.5 2.5 L17 0 V10 L14.5 12.5 Z" fill="#3d8bcd"/>
 </symbol>
 <symbol id="i-fl" overflow="visible">
  <path d="M1 7 L7 0.5 H11 Q14 0.5 15 4 V17 H1 Z" fill="#dcdcdc" stroke="#8a8a8a" stroke-width="1.2"/>
  <path d="M1.5 6.5 L7 1 L10.5 3.5 L4.5 10 Z" fill="#5ba6e1"/>
 </symbol>
</defs>
<rect x="202" y="931" width="276" height="28" fill="#efefef"/>
<!-- orbit -->
<path d="M206.3 945 Q206.5 941.5 214.8 941.5 Q223.3 941.5 223.3 945" fill="none" stroke="#5a5a5a" stroke-width="1.3"/>
<path d="M212.8 952.5 V940.2 H210.6 L214.8 935.3 L219 940.2 H216.8 V952.5 Z" fill="#fafafa" stroke="#6a6a6a" stroke-width="1.1" stroke-linejoin="round"/>
<path d="M223.3 945 Q223.3 948.5 214.8 948.5 Q208.5 948.5 207 946.5" fill="none" stroke="#5a5a5a" stroke-width="1.3"/>
<path d="M206 944.5 L207.3 948.3 L210 946" fill="#333" stroke="#333" stroke-width="0.8"/>
<use href="#caret" x="230.3" y="942.2"/>
<!-- look at -->
<rect x="245" y="940" width="16.5" height="12" rx="1" fill="#ececec" stroke="#767676" stroke-width="1.3"/>
<rect x="247.5" y="942.8" width="11.5" height="6.5" fill="#9da3ac"/>
<path d="M246 939.5 L249.5 936.5 V939.5 M250.5 939.5 L257.5 937.5 V939.5" fill="none" stroke="#767676" stroke-width="1.2"/>
<!-- hand -->
<path d="M277.5 952.3 Q275 948 274.8 945.5 Q275 943.7 277 944.5 L279 947 V938.5 Q279 937 280.3 937 Q281.6 937 281.6 938.5 V943 V936.7 Q281.6 935.3 283 935.3 Q284.3 935.3 284.3 936.7 V943 V937.3 Q284.3 936 285.6 936 Q287 936 287 937.3 V943 V939 Q287 937.8 288.3 937.8 Q289.6 937.8 289.6 939 V946 Q289.6 950 287.5 952.3 Z" fill="#fff" stroke="#6b6b6b" stroke-width="1.1" stroke-linejoin="round"/>
<!-- zoom + -->
<circle cx="310.8" cy="941.8" r="6.2" fill="#eef5f7" stroke="#6b6b6b" stroke-width="1.5"/>
<path d="M315.5 946.5 L321 951.5" stroke="#333" stroke-width="2.6" stroke-linecap="round"/>
<path d="M320.6 935.2 V940.2 M318.1 937.7 H323.1 M318.1 941.5 H323.1" stroke="#555" stroke-width="1.1"/>
<!-- zoom window -->
<rect x="335.3" y="936.5" width="17" height="16.2" fill="none" stroke="#9a9a9a" stroke-width="0.9" stroke-dasharray="1.6 1.6"/>
<circle cx="341.9" cy="942.2" r="6.2" fill="#eef5f7" stroke="#6b6b6b" stroke-width="1.5"/>
<path d="M346.5 946.8 L351.6 951.8" stroke="#333" stroke-width="2.6" stroke-linecap="round"/>
<use href="#caret" x="359" y="942.2"/>
<!-- display -->
<rect x="373.6" y="935.6" width="17" height="13" rx="1.2" fill="#b9c1cc" stroke="#737a84" stroke-width="1.1"/>
<rect x="375.8" y="937.8" width="12.6" height="8.6" fill="#8fb4e0"/>
<path d="M379.5 949 V951 M384.8 949 V951" stroke="#777" stroke-width="1"/>
<rect x="377" y="951" width="10.5" height="1.8" rx="0.8" fill="#6e6e6e"/>
<use href="#caret" x="394.3" y="942.2"/>
<!-- grid -->
<rect x="409" y="936" width="18" height="16.8" rx="1.2" fill="#e6e6e6" stroke="#7e7e7e" stroke-width="1"/>
<path d="M412 936.5 V952.3 M415 936.5 V952.3 M418 936.5 V952.3 M421 936.5 V952.3 M424 936.5 V952.3 M409.5 939 H426.5 M409.5 942 H426.5 M409.5 945 H426.5 M409.5 948 H426.5 M409.5 951 H426.5" stroke="#9a9a9a" stroke-width="0.9"/>
<rect x="409.5" y="945" width="17" height="7.3" fill="#707070" fill-opacity="0.25"/>
<use href="#caret" x="430" y="942.2"/>
<!-- viewports -->
<rect x="445.2" y="936.8" width="17.6" height="15" rx="1.3" fill="#82a9d6" stroke="#6d88aa" stroke-width="1"/>
<path d="M454 936.8 V951.8 M445.2 944.3 H462.8" stroke="#5d7ca6" stroke-width="1.1"/>
<use href="#caret" x="466.2" y="942.2"/>
<use href="#i-rx" x="6.5" y="984"/>
<use href="#i-rx" x="34.5" y="984"/>
<use href="#i-rx" x="62.4" y="984"/>
<use href="#i-sk" x="90.8" y="984"/>
<use href="#i-ex" x="118.8" y="984"/>
<use href="#i-ex" x="146.8" y="984"/>
<use href="#i-ex" x="174.7" y="984"/>
<use href="#i-mv" x="203.2" y="984"/>
<use href="#i-mv" x="231.1" y="984"/>
<use href="#i-mv" x="259.0" y="984"/>
<use href="#i-sk" x="286.5" y="984"/>
<use href="#i-ex" x="314.4" y="984"/>
<use href="#i-ex" x="342.4" y="984"/>
<use href="#i-rx" x="369.8" y="984"/>
<use href="#i-ex" x="398.3" y="984"/>
<use href="#i-ex" x="426.2" y="984"/>
<use href="#i-sk" x="454.2" y="984"/>
<use href="#i-ex" x="482.1" y="984"/>
<use href="#i-ex" x="510.1" y="984"/>
<use href="#i-ex" x="538.0" y="984"/>
<use href="#i-jt" x="566.0" y="984"/>
<use href="#i-mv" x="594.4" y="984"/>
<use href="#i-ex" x="621.9" y="984"/>
<use href="#i-sk" x="649.9" y="984"/>
<use href="#i-sp" x="677.8" y="984"/>
<use href="#i-mv" x="706.2" y="984"/>
<use href="#i-sp" x="733.7" y="984"/>
<use href="#i-mv" x="762.1" y="984"/>
<use href="#i-cb" x="789.6" y="984"/>
<use href="#i-ex" x="817.5" y="984"/>
<use href="#i-ex" x="845.5" y="984"/>
<use href="#i-sk" x="873.4" y="984"/>
<use href="#i-ex" x="901.4" y="984"/>
<use href="#i-fl" x="929.4" y="984"/>
<use href="#i-ex" x="957.3" y="984"/>
<use href="#i-ex" x="985.2" y="984"/>
<use href="#i-rx" x="1012.7" y="984"/>
</svg>

</body></html>
